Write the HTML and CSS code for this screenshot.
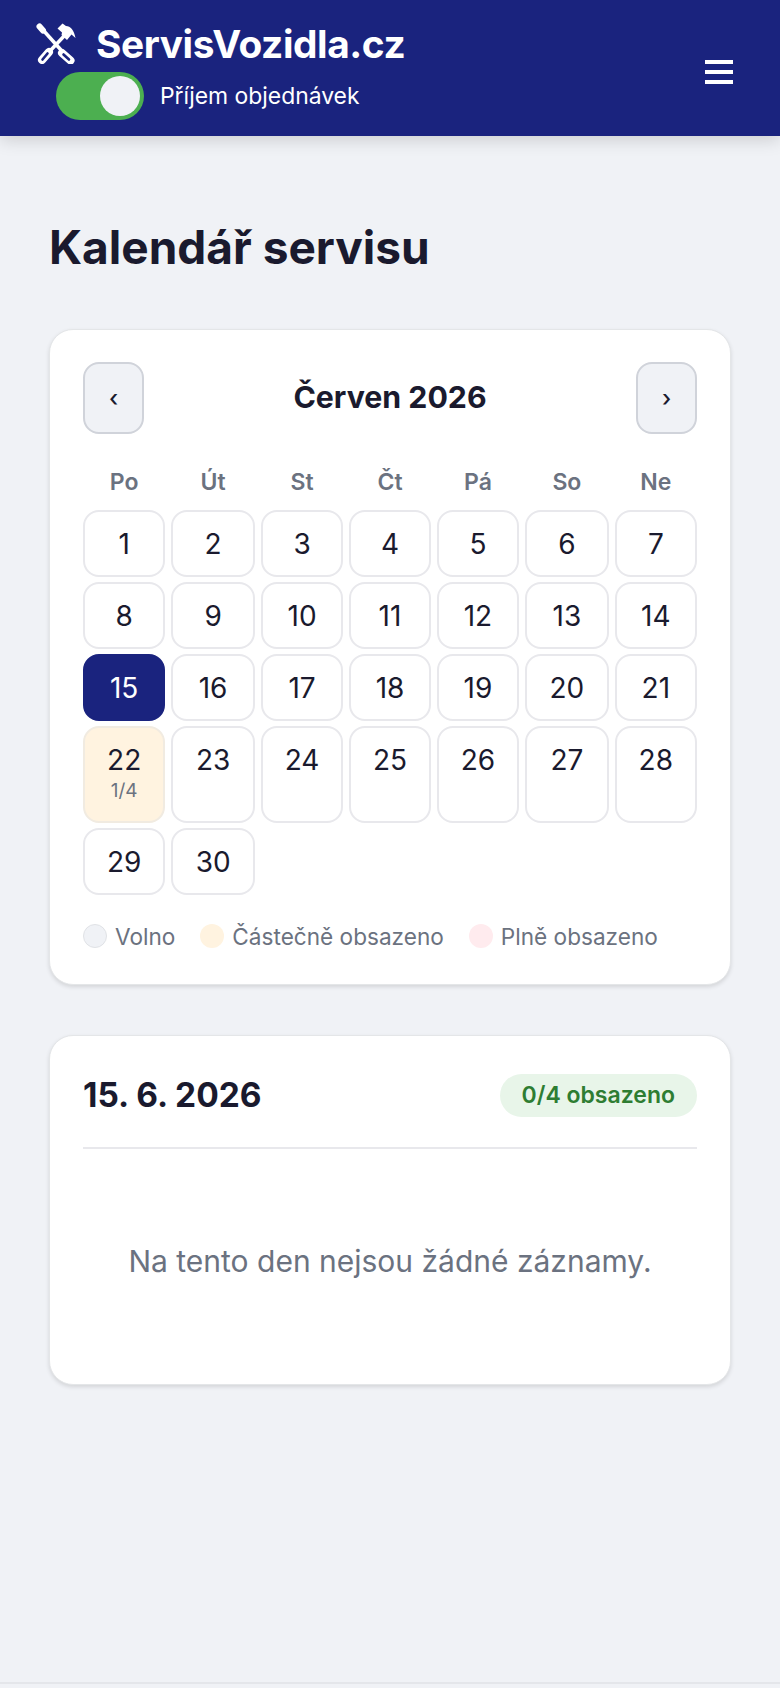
FILE: index.html
```html
<!DOCTYPE html>
<html lang="cs">
<head>
<meta charset="utf-8">
<title>Kalendář servisu</title>
<link rel="stylesheet" href="styles.css">
</head>
<body>
<header class="topbar">
  <div class="brand-block">
    <div class="brand">
      <svg class="brand-icon" viewBox="0 0 40 42" aria-hidden="true">
        <g fill="none" stroke="#fff" stroke-linecap="round">
          <path stroke-width="3.500" stroke-linecap="butt" d="M7 8 25 28"/>
          <path stroke-width="6" d="M3.500 4.500 7 8.500"/>
          <path stroke-width="3.500" stroke-linecap="butt" d="M14 29 29 13"/>
          <path stroke-width="8" d="M26 31 34.500 38.500"/>
          <path stroke-width="8" d="M6 38 13 30"/>
        </g>
        <g fill="none" stroke="#1a237e" stroke-width="2.600" stroke-linecap="round">
          <path d="M27.500 32.500 33 37.500"/>
          <path d="M6.500 37.500 11.500 31.500"/>
        </g>
        <path fill="#fff" d="M21.500 6.500 26.500 1.500 30 4C34.500 4 38 8 39.500 16L35.500 12.500 31 18 25.500 13 26 10.500Z"/>
      </svg>
      <span class="brand-name">ServisVozidla.cz</span>
    </div>
    <div class="toggle-row">
      <span class="toggle"><span class="knob"></span></span>
      <span class="toggle-label">Příjem objednávek</span>
    </div>
  </div>
  <div class="burger"><span></span><span></span><span></span></div>
</header>
<main class="content">
  <h1 class="page-title">Kalendář servisu</h1>
  <section class="card">
    <div class="cal-head">
      <button class="nav-btn">‹</button>
      <h2 class="month">Červen 2026</h2>
      <button class="nav-btn">›</button>
    </div>
    <div class="cal-grid">
      <div class="dow">Po</div><div class="dow">Út</div><div class="dow">St</div><div class="dow">Čt</div><div class="dow">Pá</div><div class="dow">So</div><div class="dow">Ne</div>
      <div class="day">1</div><div class="day">2</div><div class="day">3</div><div class="day">4</div><div class="day">5</div><div class="day">6</div><div class="day">7</div>
      <div class="day">8</div><div class="day">9</div><div class="day">10</div><div class="day">11</div><div class="day">12</div><div class="day">13</div><div class="day">14</div>
      <div class="day selected">15</div><div class="day">16</div><div class="day">17</div><div class="day">18</div><div class="day">19</div><div class="day">20</div><div class="day">21</div>
      <div class="day partial">22<span class="count">1/4</span></div><div class="day">23</div><div class="day">24</div><div class="day">25</div><div class="day">26</div><div class="day">27</div><div class="day">28</div>
      <div class="day">29</div><div class="day">30</div>
    </div>
    <div class="legend">
      <div class="legend-item"><span class="dot dot-free"></span>Volno</div>
      <div class="legend-item"><span class="dot dot-partial"></span>Částečně obsazeno</div>
      <div class="legend-item"><span class="dot dot-full"></span>Plně obsazeno</div>
    </div>
  </section>
  <section class="card detail">
    <div class="detail-head">
      <h2 class="detail-date">15. 6. 2026</h2>
      <span class="badge">0/4 obsazeno</span>
    </div>
    <p class="empty">Na tento den nejsou žádné záznamy.</p>
  </section>
</main>
<div class="footer-line"></div>
</body>
</html>
```
FILE: styles.css
```css
* { box-sizing: border-box; }
html, body { margin: 0; height: 100%; }
body {
  background: #f0f2f6;
  color: #1a1a2e;
  font-family: "Inter", "Noto Sans", sans-serif;
  height: 1688px;
  overflow: hidden;
  display: flex;
  flex-direction: column;
}
.topbar {
  height: 136px;
  flex: none;
  background: #1a237e;
  color: #fff;
  display: flex;
  align-items: center;
  justify-content: space-between;
  padding: 5px 47px 0 36px;
  box-shadow: 0 4px 16px rgba(0,0,0,.15);
}
.brand { display: flex; align-items: center; gap: 20px; height: 44px; }
.brand-icon { width: 40px; height: 42px; flex: none; }
.brand-name { font-size: 38.8px; font-weight: 700; letter-spacing: -.4px; }
.toggle-row { display: flex; align-items: center; gap: 16px; margin: 7px 0 0 20px; }
.toggle { width: 88px; height: 48px; border-radius: 24px; background: #4caf50; display: flex; align-items: center; justify-content: flex-end; padding-right: 4px; }
.knob { width: 40px; height: 40px; border-radius: 50%; background: #f0f2f6; }
.toggle-label { font-size: 22.9px; color: #fff; }
.burger { width: 28px; display: flex; flex-direction: column; gap: 6px; margin-top: 3px; }
.burger span { height: 4px; background: #fff; }
.content { flex: 1; padding: 83px 49px 0; }
.page-title { margin: 0 0 54px; font-size: 46px; line-height: 56px; font-weight: 700; }
.card {
  background: #fff;
  border: 1px solid #e4e6e8;
  border-radius: 24px;
  padding: 32px 33px 36px;
  box-shadow: 0 2px 4px rgba(0,0,0,.12);
  margin-bottom: 50px;
}
.cal-head { display: flex; align-items: center; justify-content: space-between; margin-bottom: 32px; }
.nav-btn { width: 61px; height: 72px; border-radius: 16px; border: 2px solid #d0d3da; background: #f0f2f6; color: #1a1a2e; font: 500 23px "Inter", sans-serif; padding: 0; }
.month { margin: 0 0 2px; font-size: 30.3px; font-weight: 700; }
.cal-grid { display: grid; grid-template-columns: 82.5fr 84.5fr 82.5fr 82.5fr 82.5fr 84.5fr 82.5fr; gap: 5px 5.6px; }
.dow { text-align: center; font-size: 23px; font-weight: 600; color: #6b7280; height: 39px; line-height: 32px; }
.day {
  min-height: 67px;
  border: 2px solid #e8e8ec;
  border-radius: 16px;
  background: #fff;
  font-size: 28px;
  line-height: 36px;
  text-align: center;
  padding-top: 14px;
  display: flex;
  flex-direction: column;
  align-items: center;
}
.day.selected { background: #1a237e; color: #fff; border-color: #1a237e; }
.day.partial { background: #fff3e0; border-color: #f1ebe1; padding-bottom: 17px; }
.count { font-size: 19px; line-height: 26px; color: #6b7280; }
.legend { display: flex; gap: 25px; margin-top: 29px; height: 24px; align-items: center; }
.legend-item { display: flex; align-items: center; gap: 8px; font-size: 22.6px; color: #6b7280; }
.dot { width: 24px; height: 24px; border-radius: 50%; }
.dot-free { background: #f0f2f6; border: 1px solid #e0e2e6; }
.dot-partial { background: #fff3e0; }
.dot-full { background: #ffebee; }
.detail { padding-top: 38px; height: 350px; }
.detail-head { display: flex; align-items: center; justify-content: space-between; border-bottom: 2px solid #e8e8ec; height: 75px; padding-bottom: 31px; }
.detail-date { margin: 0; font-size: 33.5px; font-weight: 700; }
.badge { background: #e8f5e9; color: #2e7d32; font-size: 23px; font-weight: 600; padding: 7.5px 22px; border-radius: 22px; }
.empty { margin: 92px 0 0; text-align: center; font-size: 30px; line-height: 40px; color: #6b7280; }
.footer-line { height: 2px; background: #e4e6ea; margin-bottom: 4px; flex: none; }
```
